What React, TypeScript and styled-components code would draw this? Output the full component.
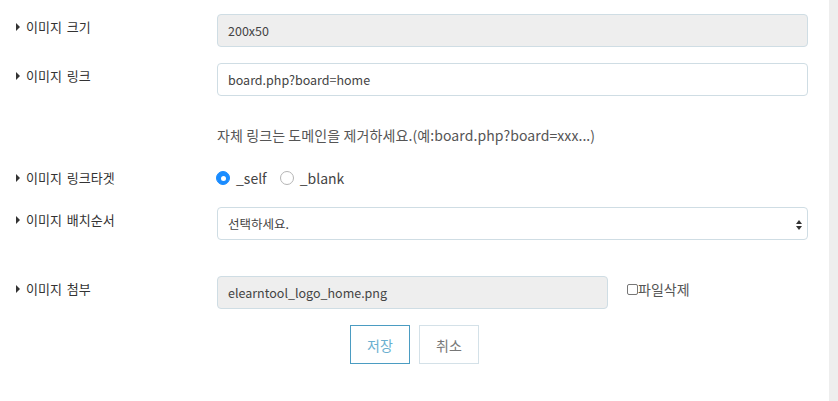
import React from "react";
import styled, { createGlobalStyle } from "styled-components";

const Global = createGlobalStyle`
  html, body { margin: 0; padding: 0; background: #fff; }
  body {
    font-family: "Noto Sans CJK KR", "Noto Sans", sans-serif;
    color: #333;
    font-size: 13px;
  }
`;

const Page = styled.div`
  display: flex;
  width: 838px;
  height: 401px;
  overflow: hidden;
`;

const Main = styled.div`
  flex: 1;
  padding: 14px 21px 0 16px;
  display: flex;
  flex-direction: column;
`;

const Side = styled.div`
  width: 9px;
  background: #eeeeee;
`;

const Row = styled.div<{ $mt?: number }>`
  display: grid;
  grid-template-columns: 201px 1fr;
  align-items: start;
  margin-top: ${(p) => p.$mt ?? 0}px;
`;

const Label = styled.div<{ $pt?: number }>`
  display: flex;
  align-items: center;
  line-height: 20px;
  padding-top: ${(p) => p.$pt ?? 3}px;
  font-size: 13px;
  color: #333;
  word-spacing: 2px;
  &::before {
    content: "";
    width: 0;
    height: 0;
    border-left: 4px solid #333;
    border-top: 4px solid transparent;
    border-bottom: 4px solid transparent;
    margin-right: 6px;
  }
`;

const Field = styled.div<{ $readonly?: boolean; $w?: number }>`
  box-sizing: border-box;
  height: 33px;
  width: ${(p) => (p.$w ? `${p.$w}px` : "100%")};
  border: 1px solid #cfdde4;
  border-radius: 4px;
  background: ${(p) => (p.$readonly ? "#eeeeee" : "#fff")};
  padding: 0 10px;
  display: flex;
  align-items: center;
  font-size: 12.5px;
  color: #444;
  position: relative;
`;

const Help = styled.div`
  line-height: 20px;
  font-size: 14px;
  letter-spacing: 0.1px;
  color: #555;
  grid-column: 2;
`;

const RadioGroup = styled.div`
  display: flex;
  align-items: center;
  height: 20px;
`;

const RadioItem = styled.label`
  display: flex;
  align-items: center;
  font-size: 14px;
  color: #444;
  margin-right: 14px;
  margin-left: -1px;
`;

const RadioDot = styled.span<{ $checked?: boolean }>`
  box-sizing: border-box;
  width: 14px;
  height: 14px;
  border-radius: 50%;
  margin-right: 6px;
  display: inline-flex;
  align-items: center;
  justify-content: center;
  background: ${(p) => (p.$checked ? "#1a8cff" : "#fff")};
  border: 1px solid ${(p) => (p.$checked ? "#1a8cff" : "#b5b5b5")};
  &::after {
    content: "";
    width: 5px;
    height: 5px;
    border-radius: 50%;
    background: #fff;
    display: ${(p) => (p.$checked ? "block" : "none")};
  }
`;

const SelectArrow = styled.svg`
  position: absolute;
  right: 5px;
  top: 12px;
`;

const AttachWrap = styled.div`
  display: flex;
  align-items: flex-start;
`;

const Check = styled.label`
  display: flex;
  align-items: center;
  margin-left: 19px;
  margin-top: 5px;
  font-size: 14px;
  color: #555;
  line-height: 16px;
`;

const CheckBox = styled.span`
  box-sizing: border-box;
  width: 11px;
  height: 11px;
  border: 1px solid #777;
  border-radius: 2px;
  background: #fff;
`;

const Buttons = styled.div`
  display: flex;
  justify-content: center;
  gap: 9px;
  margin-top: 16px;
  margin-left: 5px;
`;

const Button = styled.button<{ $primary?: boolean }>`
  box-sizing: border-box;
  width: 60px;
  height: 39px;
  background: #fff;
  border: 1px solid ${(p) => (p.$primary ? "#4b9cc2" : "#d4e1e8")};
  color: ${(p) => (p.$primary ? "#6aafd0" : "#777")};
  font-family: "Noto Sans CJK KR", sans-serif;
  font-size: 14px;
  border-radius: 0;
  padding: 0;
`;

export default function App() {
  return (
    <Page>
      <Global />
      <Main>
        <Row>
          <Label>이미지 크기</Label>
          <Field $readonly>200x50</Field>
        </Row>
        <Row $mt={16}>
          <Label>이미지 링크</Label>
          <Field>board.php?board=home</Field>
        </Row>
        <Row $mt={29}>
          <Help>자체 링크는 도메인을 제거하세요.(예:board.php?board=xxx...)</Help>
        </Row>
        <Row $mt={23}>
          <Label $pt={0}>이미지 링크타겟</Label>
          <RadioGroup>
            <RadioItem>
              <RadioDot $checked />
              _self
            </RadioItem>
            <RadioItem>
              <RadioDot />
              _blank
            </RadioItem>
          </RadioGroup>
        </Row>
        <Row $mt={19}>
          <Label>이미지 배치순서</Label>
          <Field>
            선택하세요.
            <SelectArrow width="6" height="10" viewBox="0 0 6 10">
              <path d="M3 0 L6 4 L0 4 Z M0 6 L6 6 L3 10 Z" fill="#333" />
            </SelectArrow>
          </Field>
        </Row>
        <Row $mt={36}>
          <Label>이미지 첨부</Label>
          <AttachWrap>
            <Field $readonly $w={391}>elearntool_logo_home.png</Field>
            <Check>
              <CheckBox />
              파일삭제
            </Check>
          </AttachWrap>
        </Row>
        <Buttons>
          <Button $primary>저장</Button>
          <Button>취소</Button>
        </Buttons>
      </Main>
      <Side />
    </Page>
  );
}
